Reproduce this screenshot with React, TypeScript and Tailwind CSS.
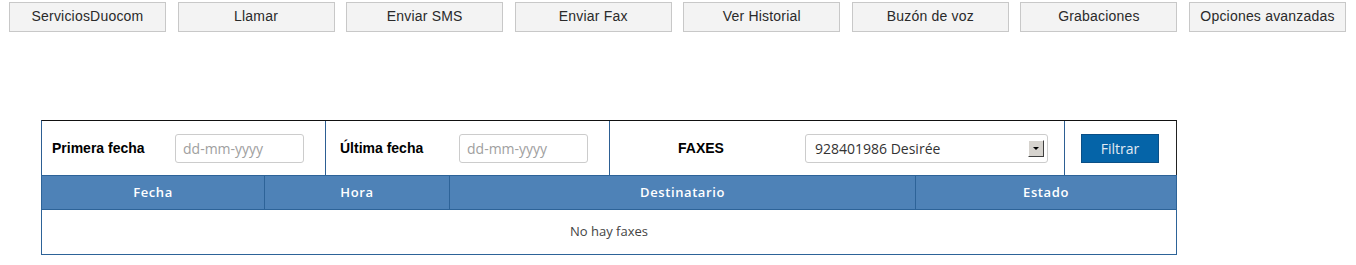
const botones = [
  'ServiciosDuocom',
  'Llamar',
  'Enviar SMS',
  'Enviar Fax',
  'Ver Historial',
  'Buzón de voz',
  'Grabaciones',
  'Opciones avanzadas',
];

const columnas = [
  { titulo: 'Fecha', ancho: 'w-[223px]' },
  { titulo: 'Hora', ancho: 'w-[185px]' },
  { titulo: 'Destinatario', ancho: 'w-[466px]' },
  { titulo: 'Estado', ancho: 'flex-1' },
];

function CampoFecha() {
  return (
    <div className="w-[129px] h-[29px] border border-[#cccccc] rounded-[3px] bg-white flex items-center px-[7px] text-[14px] text-[#a0a0a0] font-['Open_Sans',sans-serif]">
      dd-mm-yyyy
    </div>
  );
}

export default function App() {
  return (
    <div className="min-h-screen bg-white font-['Liberation_Sans',Arial,sans-serif]">
      {/* barra de botones */}
      <div className="pt-[2px] pl-[9px]">
        <div className="w-[1337px] grid grid-cols-8 gap-x-[11.6px]">
          {botones.map((b) => (
            <button
              key={b}
              className="h-[30px] pb-[1px] bg-[#f3f3f3] border border-[#c8c8c8] text-[14px] text-[#2a2a2a] tracking-[0.2px]"
            >
              {b}
            </button>
          ))}
        </div>
      </div>

      {/* filtros y tabla */}
      <div className="ml-[41px] mt-[88px] w-[1136px]">
        <div className="flex h-[55px] border-t border-t-[#111] border-l border-l-[#2d5f93] border-r border-r-[#222]">
          <div className="w-[284px] flex items-center pl-[10px] border-r border-[#2d5f93]">
            <span className="text-[14px] font-bold text-black w-[123px]">Primera fecha</span>
            <CampoFecha />
          </div>
          <div className="w-[284px] flex items-center pl-[14px] border-r border-[#2d5f93]">
            <span className="text-[14px] font-bold text-black w-[119px]">Última fecha</span>
            <CampoFecha />
          </div>
          <div className="w-[455px] flex items-center border-r border-[#2d5f93]">
            <span className="text-[14px] font-bold text-black ml-[68px] w-[127px]">FAXES</span>
            <div className="w-[243px] h-[29px] border border-[#cccccc] rounded-[3px] bg-white flex items-center pl-[9px] pr-[3px] text-[14px] text-[#333] font-['Open_Sans',sans-serif]">
              <span className="flex-1">928401986 Desirée</span>
              <div className="w-[16px] h-[17px] bg-[#d6d3ce] border border-t-white border-l-white border-r-[#404040] border-b-[#404040] flex items-center justify-center">
                <div className="w-0 h-0 border-l-[3px] border-r-[3px] border-t-[3px] border-l-transparent border-r-transparent border-t-black" />
              </div>
            </div>
          </div>
          <div className="flex-1 flex items-center pl-[16px]">
            <button className="w-[78px] h-[29px] bg-[#0564a8] border border-[#0a4f86] text-[14px] text-[#e2ebf3] font-['Open_Sans',sans-serif]">
              Filtrar
            </button>
          </div>
        </div>

        <div className="border border-[#2d6398]">
          <div className="flex h-[34px] bg-[#4e82b7] border-b border-[#2d6398]">
            {columnas.map((c, i) => (
              <div
                key={c.titulo}
                className={`${c.ancho} flex items-center justify-center text-[13px] font-semibold text-white tracking-[0.6px] font-['Open_Sans',sans-serif] ${i < 3 ? 'border-r border-[#2d6398]' : ''}`}
              >
                {c.titulo}
              </div>
            ))}
          </div>
          <div className="h-[44px] flex items-center justify-center text-[13px] text-[#444] font-['Open_Sans',sans-serif]">
            No hay faxes
          </div>
        </div>
      </div>
    </div>
  );
}
